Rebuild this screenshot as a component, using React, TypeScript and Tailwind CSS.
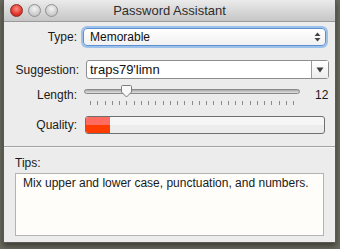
export default function App() {
  const ticks = Array.from({ length: 29 });

  return (
    <div className="h-[249px] w-[340px] overflow-hidden bg-[#6b6a5e] font-['Liberation_Sans',sans-serif] text-[12px] text-[#1a1a1a]">
      <div className="ml-[3px] flex h-[243px] w-[333px] flex-col border-x border-b border-[#5a5a52] bg-[#ececec] shadow-[0_3px_6px_rgba(0,0,0,0.45)]">
        {/* title bar */}
        <div className="relative flex h-[22px] items-center border-b border-[#9a9a9a] bg-gradient-to-b from-[#ebebeb] to-[#c6c6c6]">
          <div className="ml-[6px] flex gap-[4.5px]">
            <span className="h-[13px] w-[13px] rounded-full border border-[#8e2a22] bg-[radial-gradient(circle_at_50%_35%,#ff8f85,#e0352b_60%,#b5231b)]" />
            <span className="h-[13px] w-[13px] rounded-full border border-[#8f8f8f] bg-[radial-gradient(circle_at_50%_35%,#f4f4f4,#cfcfcf_60%,#b9b9b9)]" />
            <span className="h-[13px] w-[13px] rounded-full border border-[#8f8f8f] bg-[radial-gradient(circle_at_50%_35%,#f4f4f4,#cfcfcf_60%,#b9b9b9)]" />
          </div>
          <span className="absolute inset-x-0 text-center text-[13px] text-[#2d2d2d]">Password Assistant</span>
        </div>

        {/* form */}
        <div className="flex flex-col border-b border-[#a3a3a3] pb-[12px]">
          <div className="mt-[6px] flex h-[18px] items-center">
            <span className="w-[73px] text-right">Type:</span>
            <div className="ml-[6px] flex h-[18px] w-[243px] items-center justify-between rounded-[4px] border border-[#5f8fd0] bg-gradient-to-b from-white to-[#f1f1f1] pl-[6px] pr-[4px] shadow-[0_0_0_2px_#9cc1ea]">
              <span className="text-[#111]">Memorable</span>
              <svg width="7" height="10" viewBox="0 0 7 10">
                <path d="M3.5 0.5 L6.5 4 L0.5 4 Z" fill="#444" />
                <path d="M3.5 9.5 L6.5 6 L0.5 6 Z" fill="#444" />
              </svg>
            </div>
          </div>

          <div className="mt-[14px] flex h-[19px] items-center">
            <span className="w-[75px] text-right">Suggestion:</span>
            <div className="ml-[7px] flex h-[19px] w-[243px] items-stretch rounded-[3px] border border-[#8d8d8d] bg-white">
              <span className="flex flex-1 items-center pl-[3px] text-[13px] text-[#111]">traps79'limn</span>
              <div className="flex w-[17px] items-center justify-center border-l border-[#9a9a9a] bg-gradient-to-b from-white to-[#ececec]">
                <svg width="8" height="6" viewBox="0 0 8 6">
                  <path d="M0.5 0.5 L7.5 0.5 L4 5.5 Z" fill="#3a3a3a" />
                </svg>
              </div>
            </div>
          </div>

          <div className="mt-[6px] flex h-[24px] items-start">
            <span className="mt-[1px] w-[73px] text-right">Length:</span>
            <div className="relative ml-[7px] h-[24px] w-[216px]">
              <div className="absolute left-0 right-0 top-[4px] h-[5px] rounded-full border border-[#8a8a8a] bg-gradient-to-b from-[#a9a9a9] to-[#e2e2e2]" />
              <svg className="absolute left-[36px] top-0" width="13" height="13" viewBox="0 0 13 13">
                <path d="M1.5 1.5 Q1.5 0.5 2.5 0.5 L10.5 0.5 Q11.5 0.5 11.5 1.5 L11.5 7 L6.5 12 L1.5 7 Z" fill="#f7f7f7" stroke="#7c7c7c" />
              </svg>
              <div className="absolute left-[6px] right-[6px] top-[16px] flex justify-between">
                {ticks.map((_, i) => (
                  <span key={i} className="h-[4px] w-px bg-[#8a8a8a]" />
                ))}
              </div>
            </div>
            <span className="ml-[15px] mt-[1px]">12</span>
          </div>

          <div className="mt-[7px] flex h-[18px] items-center">
            <span className="w-[73px] text-right">Quality:</span>
            <div className="ml-[8px] flex h-[18px] w-[240px] overflow-hidden rounded-[3px] border border-[#6f6f6f] bg-[linear-gradient(#f6f6f6_50%,#ececec_50%)]">
              <div className="w-[24px] bg-[linear-gradient(#ff6b5f_50%,#ff3c00_50%)]" />
            </div>
          </div>
        </div>

        {/* tips */}
        <div className="flex flex-1 flex-col border-t border-[#f5f5f5] px-[11px] pb-[6px]">
          <span className="mt-[6px]">Tips:</span>
          <div className="mt-[1px] flex-1 border border-[#b3b3b3] bg-[#fffdf9] px-[7px] pt-[1px] leading-[16px]">
            Mix upper and lower case, punctuation, and numbers.
          </div>
        </div>
      </div>
    </div>
  );
}
